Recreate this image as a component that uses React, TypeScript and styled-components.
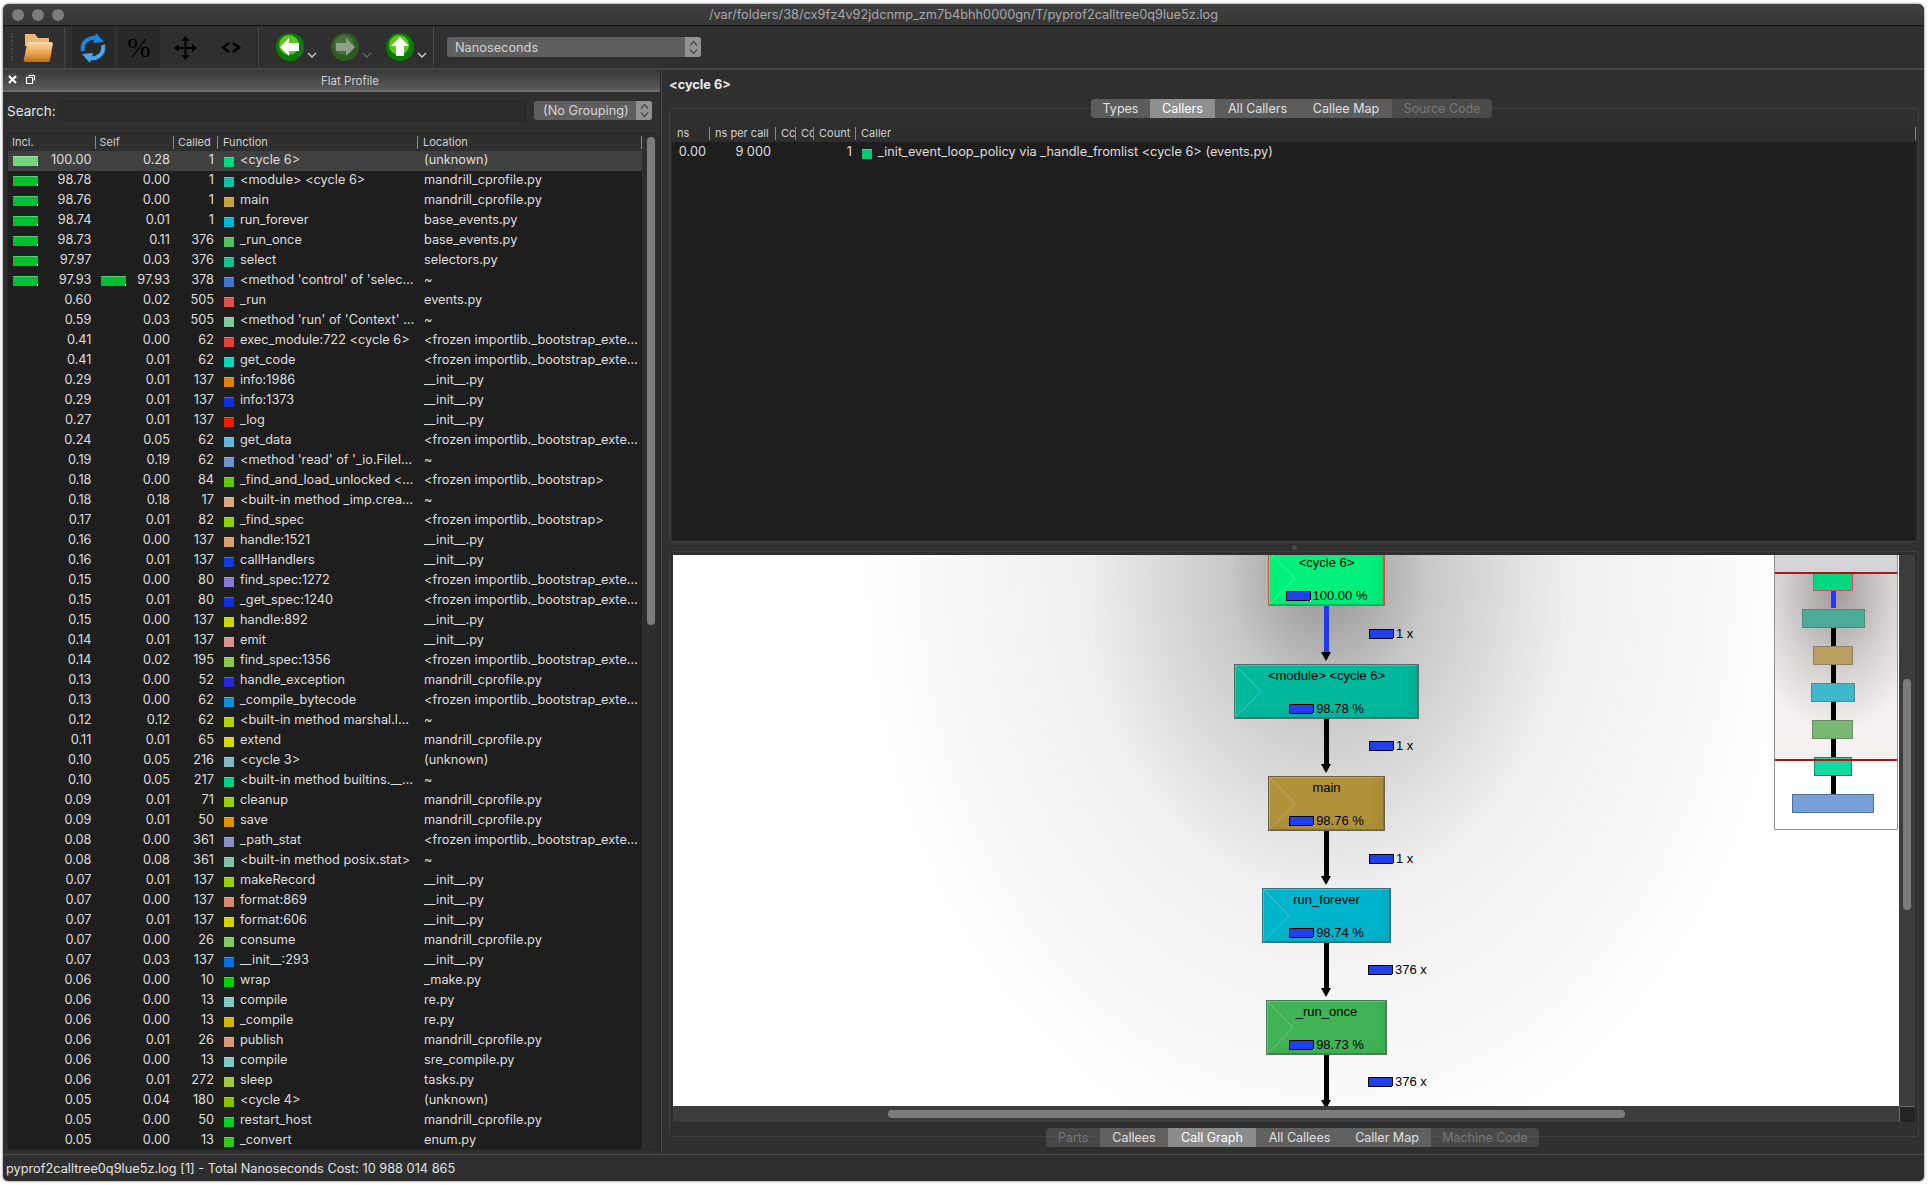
import React from 'react';
import styled, { createGlobalStyle } from 'styled-components';

const FROZEN_EXT = '<frozen importlib._bootstrap_exte…';
const FROZEN = '<frozen importlib._bootstrap>';
const MANDRILL = 'mandrill_cprofile.py';
const INIT = '__init__.py';

type Row = [string, string, string, string, string, string];

const ROWS: Row[] = [
  ['100.00', '0.28', '1', '#00d880', '<cycle 6>', '(unknown)'],
  ['98.78', '0.00', '1', '#10bfa5', '<module> <cycle 6>', MANDRILL],
  ['98.76', '0.00', '1', '#c8a040', 'main', MANDRILL],
  ['98.74', '0.01', '1', '#00b8d8', 'run_forever', 'base_events.py'],
  ['98.73', '0.11', '376', '#50c060', '_run_once', 'base_events.py'],
  ['97.97', '0.03', '376', '#10c090', 'select', 'selectors.py'],
  ['97.93', '97.93', '378', '#3f76d0', "<method 'control' of 'selec…", '~'],
  ['0.60', '0.02', '505', '#e05050', '_run', 'events.py'],
  ['0.59', '0.03', '505', '#80c8a0', "<method 'run' of 'Context' …", '~'],
  ['0.41', '0.00', '62', '#e04040', 'exec_module:722 <cycle 6>', FROZEN_EXT],
  ['0.41', '0.01', '62', '#00d8c0', 'get_code', FROZEN_EXT],
  ['0.29', '0.01', '137', '#e08000', 'info:1986', INIT],
  ['0.29', '0.01', '137', '#1030e0', 'info:1373', INIT],
  ['0.27', '0.01', '137', '#e82000', '_log', INIT],
  ['0.24', '0.05', '62', '#60b8d8', 'get_data', FROZEN_EXT],
  ['0.19', '0.19', '62', '#7090d0', "<method 'read' of '_io.FileI…", '~'],
  ['0.18', '0.00', '84', '#60c800', '_find_and_load_unlocked <…', FROZEN],
  ['0.18', '0.18', '17', '#d8a880', '<built-in method _imp.crea…', '~'],
  ['0.17', '0.01', '82', '#90d000', '_find_spec', FROZEN],
  ['0.16', '0.00', '137', '#d8a070', 'handle:1521', INIT],
  ['0.16', '0.01', '137', '#1038e0', 'callHandlers', INIT],
  ['0.15', '0.00', '80', '#8878d8', 'find_spec:1272', FROZEN_EXT],
  ['0.15', '0.01', '80', '#1030e0', '_get_spec:1240', FROZEN_EXT],
  ['0.15', '0.00', '137', '#c8d800', 'handle:892', INIT],
  ['0.14', '0.01', '137', '#d89090', 'emit', INIT],
  ['0.14', '0.02', '195', '#88c848', 'find_spec:1356', FROZEN_EXT],
  ['0.13', '0.00', '52', '#2828e0', 'handle_exception', MANDRILL],
  ['0.13', '0.00', '62', '#1090d8', '_compile_bytecode', FROZEN_EXT],
  ['0.12', '0.12', '62', '#b0d000', '<built-in method marshal.l…', '~'],
  ['0.11', '0.01', '65', '#d8d800', 'extend', MANDRILL],
  ['0.10', '0.05', '216', '#80b8c8', '<cycle 3>', '(unknown)'],
  ['0.10', '0.05', '217', '#00d088', '<built-in method builtins.__…', '~'],
  ['0.09', '0.01', '71', '#98d000', 'cleanup', MANDRILL],
  ['0.09', '0.01', '50', '#e09000', 'save', MANDRILL],
  ['0.08', '0.00', '361', '#8890c8', '_path_stat', FROZEN_EXT],
  ['0.08', '0.08', '361', '#80c0a8', '<built-in method posix.stat>', '~'],
  ['0.07', '0.01', '137', '#98d000', 'makeRecord', INIT],
  ['0.07', '0.00', '137', '#d88870', 'format:869', INIT],
  ['0.07', '0.01', '137', '#d8d000', 'format:606', INIT],
  ['0.07', '0.00', '26', '#80c860', 'consume', MANDRILL],
  ['0.07', '0.03', '137', '#0070e0', '__init__:293', INIT],
  ['0.06', '0.00', '10', '#00d000', 'wrap', '_make.py'],
  ['0.06', '0.00', '13', '#80c8c8', 'compile', 're.py'],
  ['0.06', '0.00', '13', '#d0b800', '_compile', 're.py'],
  ['0.06', '0.01', '26', '#d89878', 'publish', MANDRILL],
  ['0.06', '0.00', '13', '#80c8c8', 'compile', 'sre_compile.py'],
  ['0.06', '0.01', '272', '#a0c840', 'sleep', 'tasks.py'],
  ['0.05', '0.04', '180', '#88c000', '<cycle 4>', '(unknown)'],
  ['0.05', '0.00', '50', '#00d020', 'restart_host', MANDRILL],
  ['0.05', '0.00', '13', '#30c818', '_convert', 'enum.py'],
];

const NODES = [
  { label: '<cycle 6>', cost: '100.00 %', x: 595, y: -4, w: 117, color: '#00f07c', edge: '#d84c3c' },
  { label: '<module> <cycle 6>', cost: '98.78 %', x: 561, y: 109, w: 185, color: '#00b89c', edge: '#4e716c' },
  { label: 'main', cost: '98.76 %', x: 595, y: 221, w: 117, color: '#b0923a', edge: '#6a6040' },
  { label: 'run_forever', cost: '98.74 %', x: 589, y: 333, w: 129, color: '#00b4cc', edge: '#33707c' },
  { label: '_run_once', cost: '98.73 %', x: 593, y: 445, w: 121, color: '#40b455', edge: '#4c7c55' },
];

const EDGES = [
  { top: 51, height: 46, blue: true, count: '1 x', labelX: 696, labelY: 74 },
  { top: 164, height: 45, blue: false, count: '1 x', labelX: 696, labelY: 186 },
  { top: 276, height: 45, blue: false, count: '1 x', labelX: 696, labelY: 299 },
  { top: 388, height: 45, blue: false, count: '376 x', labelX: 695, labelY: 410 },
  { top: 500, height: 45, blue: false, count: '376 x', labelX: 695, labelY: 522 },
];

const TOP_TABS = [
  { label: 'Types', width: 59 },
  { label: 'Callers', width: 65, active: true },
  { label: 'All Callers', width: 85 },
  { label: 'Callee Map', width: 92 },
  { label: 'Source Code', width: 100, off: true },
];

const BOTTOM_TABS = [
  { label: 'Parts', width: 54, off: true },
  { label: 'Callees', width: 68 },
  { label: 'Call Graph', width: 88, active: true },
  { label: 'All Callees', width: 87 },
  { label: 'Caller Map', width: 88 },
  { label: 'Machine Code', width: 108, off: true },
];

const GlobalStyle = createGlobalStyle`
  html, body {
    margin: 0;
    background: #ffffff;
  }

  body {
    font-family: Inter, "Liberation Sans", sans-serif;
    font-size: 12.75px;
    color: #dedede;
  }
`;

const FolderIcon = () => (
  <svg width="30" height="31" viewBox="0 0 30 31">
    <defs>
      <linearGradient id="folderFront" x1="0" y1="0" x2="0" y2="1">
        <stop offset="0" stopColor="#f8d9a8" />
        <stop offset="0.55" stopColor="#e9a552" />
        <stop offset="1" stopColor="#b86f10" />
      </linearGradient>
    </defs>
    <path d="M2 2h10l3 4h11v8H2z" fill="#e8b878" />
    <path d="M3 30c-2 0-3-1-2-3l3-15c.3-1.500 1-2 2.500-2H28c1.500 0 2 1 1.800 2.500L27 28c-.3 1.500-1 2-2.500 2z" fill="url(#folderFront)" />
  </svg>
);

const ReloadIcon = () => (
  <svg width="28" height="32" viewBox="0 0 28 32" fill="none">
    <path d="M4 19C2 10 11 3 20 7" stroke="#1c86dc" strokeWidth="4" />
    <path d="M17 1l8 9-11 1z" fill="#1c86dc" />
    <path d="M24 13c2 9-7 16-16 12" stroke="#4aa8ec" strokeWidth="4" />
    <path d="M11 31l-8-9 11-1z" fill="#4aa8ec" />
  </svg>
);

const MoveIcon = () => (
  <svg width="23" height="24" viewBox="0 0 23 24">
    <path d="M11.500 4V20M4 12H19" stroke="#000000" strokeWidth="2" />
    <path d="M11.500 0L15.500 5H7.500zM11.500 24L7.500 19H15.500zM0 12L5 8V16zM23 12L18 16V8z" fill="#000000" />
  </svg>
);

const AnglesIcon = () => (
  <svg width="20" height="11" viewBox="0 0 20 11" fill="none" stroke="#000000" strokeWidth="2.400">
    <path d="M8 1L2 5.500L8 10" />
    <path d="M12 1L18 5.500L12 10" />
  </svg>
);

const NavIcon: React.FC<{ angle: number; dim?: boolean }> = ({ angle, dim }) => (
  <svg width="28" height="28" viewBox="0 0 28 28">
    <circle cx="14" cy="14" r="14" fill={dim ? '#2f5a22' : '#0c7a08'} />
    <circle cx="13" cy="12" r="10" fill={dim ? '#47733a' : '#5cc81c'} />
    <polygon
      points="4,14 13,5 13,10 23,10 23,18 13,18 13,23"
      fill={dim ? '#8f9f8b' : '#ffffff'}
      transform={`rotate(${angle} 14 14)`}
    />
  </svg>
);

const SmallChevron: React.FC<{ dim?: boolean }> = ({ dim }) => (
  <svg width="10" height="7" viewBox="0 0 10 7" fill="none">
    <path d="M1 1l4 4 4-4" stroke={dim ? '#666666' : '#d0d0d0'} strokeWidth="1.300" />
  </svg>
);

const UpDownArrows = () => (
  <svg width="9" height="15" viewBox="0 0 9 15" fill="none" stroke="#2e2e2e" strokeWidth="1.100">
    <path d="M1 5.500l3.500-4 3.500 4" />
    <path d="M1 9.500l3.500 4 3.500-4" />
  </svg>
);

const CloseGlyph = () => (
  <svg width="9" height="9" viewBox="0 0 9 9" stroke="#ffffff" strokeWidth="2">
    <path d="M1 1l7 7M8 1l-7 7" />
  </svg>
);

const RestoreGlyph = () => (
  <svg width="9" height="9" viewBox="0 0 9 9" fill="none" stroke="#ffffff" strokeWidth="1">
    <path d="M3 2.500V.5h5.500v4.500H6.500" />
    <rect x="0.500" y="2.500" width="6" height="6" />
  </svg>
);

const NodeChevron: React.FC<{ width: number }> = ({ width }) => (
  <NodeMark width={width} height="55" viewBox={`0 0 ${width} 55`} fill="none">
    <path d="M2 2L27 27.500L2 53" stroke="#ffffff" strokeOpacity="0.4" strokeWidth="0.700" />
  </NodeMark>
);

const BirdsEye = () => (
  <svg width="124" height="275" viewBox="0 0 124 275">
    <defs>
      <radialGradient id="birdShade" cx="0.5" cy="0.1" r="0.75">
        <stop offset="0" stopColor="#a09a9a" />
        <stop offset="0.6" stopColor="#d8d4d4" />
        <stop offset="1" stopColor="#f6f0f0" />
      </radialGradient>
    </defs>
    <rect x="0" y="0" width="124" height="275" fill="#ffffff" />
    <rect x="0" y="0" width="124" height="18" fill="#d4d4d6" />
    <rect x="0" y="18" width="124" height="187" fill="url(#birdShade)" />
    <rect x="57" y="35" width="5" height="18" fill="#2238ff" />
    <rect x="57" y="73" width="5" height="18" fill="#000000" />
    <rect x="57" y="110" width="5" height="18" fill="#000000" />
    <rect x="57" y="147" width="5" height="18" fill="#000000" />
    <rect x="57" y="184" width="5" height="18" fill="#000000" />
    <rect x="57" y="221" width="5" height="18" fill="#000000" />
    <rect x="39.500" y="17.500" width="39" height="18" fill="#00d880" stroke="#e84868" />
    <rect x="28.500" y="54.500" width="62" height="18" fill="#4cab98" stroke="#4a8a80" />
    <rect x="39.500" y="91.500" width="39" height="18" fill="#baa060" stroke="#8a8268" />
    <rect x="37.500" y="128.500" width="43" height="18" fill="#40b8cc" stroke="#4a8a98" />
    <rect x="38.500" y="165.500" width="40" height="18" fill="#78b870" stroke="#6a8a68" />
    <rect x="40.500" y="202.500" width="37" height="18" fill="#14d8a0" stroke="#108a68" />
    <rect x="18.500" y="239.500" width="81" height="18" fill="#78a0d8" stroke="#50709c" />
    <rect x="0" y="17" width="124" height="2" fill="#a01818" />
    <rect x="0" y="204" width="124" height="2" fill="#a01818" />
    <path d="M0.500 0V274.500H123.500V0" fill="none" stroke="#909090" />
  </svg>
);

const App: React.FC = () => (
  <>
    <GlobalStyle />
    <SPage>
      <SWindow>
        <STitleBar>
          <STrafficLights>
            <STrafficLight />
            <STrafficLight />
            <STrafficLight />
          </STrafficLights>
          /var/folders/38/cx9fz4v92jdcnmp_zm7b4bhh0000gn/T/pyprof2calltree0q9lue5z.log
        </STitleBar>

        <SToolbar>
          <SHandle />
          <SFolderSlot>
            <FolderIcon />
          </SFolderSlot>
          <SToolSeparator $left={11} />
          <SToolGroup>
            <SToolButton $pressed>
              <ReloadIcon />
            </SToolButton>
            <SToolButton $pressed>
              <SPercent>%</SPercent>
            </SToolButton>
            <SToolButton>
              <MoveIcon />
            </SToolButton>
            <SToolButton>
              <AnglesIcon />
            </SToolButton>
          </SToolGroup>
          <SToolSeparator $left={6} />
          <SNavGroup>
            <SNavButton>
              <NavIcon angle={0} />
              <SmallChevron />
            </SNavButton>
            <SNavButton>
              <NavIcon angle={180} dim />
              <SmallChevron dim />
            </SNavButton>
            <SNavButton>
              <NavIcon angle={90} />
              <SmallChevron />
            </SNavButton>
          </SNavGroup>
          <SToolSeparator $left={6} />
          <SEventCombo>
            Nanoseconds
            <SComboArrows>
              <UpDownArrows />
            </SComboArrows>
          </SEventCombo>
        </SToolbar>

        <SMain>
          <SLeftDock>
            <SDockTitle>
              <SDockButtons>
                <SDockButton>
                  <CloseGlyph />
                </SDockButton>
                <SDockButton>
                  <RestoreGlyph />
                </SDockButton>
              </SDockButtons>
              Flat Profile
            </SDockTitle>
            <SSearchRow>
              <SSearchLabel>Search:</SSearchLabel>
              <SSearchInput />
              <SGroupingCombo>
                (No Grouping)
                <SComboArrows>
                  <UpDownArrows />
                </SComboArrows>
              </SGroupingCombo>
            </SSearchRow>
            <STableFrame>
              <STable>
                <SHeaderRow>
                  <SHeaderCell>Incl.</SHeaderCell>
                  <SHeaderCell>Self</SHeaderCell>
                  <SHeaderCell>Called</SHeaderCell>
                  <SHeaderCell>Function</SHeaderCell>
                  <SHeaderCell>Location</SHeaderCell>
                </SHeaderRow>
                {ROWS.map((row, index) => (
                  <SRow key={`${row[4]}-${index}`} $selected={index === 0}>
                    <SNumberCell>
                      {index < 7 && <SCostBar $selected={index === 0} />}
                      {row[0]}
                    </SNumberCell>
                    <SNumberCell>
                      {index === 6 && <SCostBar />}
                      {row[1]}
                    </SNumberCell>
                    <SNumberCell>{row[2]}</SNumberCell>
                    <SFunctionCell>
                      <SColorSquare $color={row[3]} />
                      {row[4]}
                    </SFunctionCell>
                    <SLocationCell>{row[5]}</SLocationCell>
                  </SRow>
                ))}
              </STable>
              <STableScroll>
                <STableThumb />
              </STableScroll>
            </STableFrame>
          </SLeftDock>

          <SRightPane>
            <SHeading>{'<cycle 6>'}</SHeading>

            <STabBar $below={false}>
              {TOP_TABS.map((tab) => (
                <STab key={tab.label} $width={tab.width} $active={tab.active} $off={tab.off}>
                  {tab.label}
                </STab>
              ))}
            </STabBar>
            <STopFrame>
              <SCallerTree>
                <SCallerHeader>
                  <SCallerHead $width={38}>ns</SCallerHead>
                  <SCallerHead $width={66}>ns per call</SCallerHead>
                  <SCallerHead $width={20}>Cc</SCallerHead>
                  <SCallerHead $width={18}>Cc</SCallerHead>
                  <SCallerHead $width={42}>Count</SCallerHead>
                  <SCallerHead $width={1060}>Caller</SCallerHead>
                </SCallerHeader>
                <SCallerRow>
                  <SCallerValue $width={34}>0.00</SCallerValue>
                  <SCallerValue $width={65}>9 000</SCallerValue>
                  <SCallerValue $width={81}>1</SCallerValue>
                  <SCallerSquare $color="#00c878" />
                  <SCallerName>
                    _init_event_loop_policy via _handle_fromlist {'<cycle 6>'} (events.py)
                  </SCallerName>
                </SCallerRow>
              </SCallerTree>
            </STopFrame>

            <SPaneSplitter>
              <SSplitterDot />
            </SPaneSplitter>

            <SGraphFrame>
              <SGraphGrid>
                <SCanvas>
                  <SCanvasShade />
                  {EDGES.map((edge) => (
                    <React.Fragment key={edge.top}>
                      <SEdge $top={edge.top} $height={edge.height} $blue={edge.blue} />
                      <SEdgeLabel $x={edge.labelX} $y={edge.labelY}>
                        <SGauge />
                        {edge.count}
                      </SEdgeLabel>
                    </React.Fragment>
                  ))}
                  {NODES.map((node) => (
                    <SNode
                      key={node.label}
                      $x={node.x}
                      $y={node.y}
                      $width={node.w}
                      $color={node.color}
                      $edge={node.edge}
                    >
                      <NodeChevron width={node.w} />
                      <SNodeLabel>{node.label}</SNodeLabel>
                      <SNodeCost>
                        <SGauge />
                        {node.cost}
                      </SNodeCost>
                    </SNode>
                  ))}
                  <SBirdsEye>
                    <BirdsEye />
                  </SBirdsEye>
                </SCanvas>
                <SVerticalScroll>
                  <SVerticalThumb />
                </SVerticalScroll>
                <SHorizontalScroll>
                  <SHorizontalThumb />
                </SHorizontalScroll>
                <SScrollCorner />
              </SGraphGrid>
            </SGraphFrame>

            <STabBar $below>
              {BOTTOM_TABS.map((tab) => (
                <STab key={tab.label} $width={tab.width} $active={tab.active} $off={tab.off} $glass>
                  {tab.label}
                </STab>
              ))}
            </STabBar>
          </SRightPane>
        </SMain>

        <SStatusBar>pyprof2calltree0q9lue5z.log [1] - Total Nanoseconds Cost: 10 988 014 865</SStatusBar>
      </SWindow>
    </SPage>
  </>
);

const SPage = styled.div`
  box-sizing: border-box;
  width: 1928px;
  height: 1185px;
  padding: 4px 4px 4px 3px;
  overflow: hidden;
  background: #ffffff;
`;

const SWindow = styled.div`
  display: flex;
  flex-direction: column;

  height: 100%;
  border-radius: 6px 6px 5px 5px;
  overflow: hidden;
  background: #2f2f2f;
  box-shadow: 0 0 3px rgba(0, 0, 0, 0.6);
`;

const STitleBar = styled.div`
  position: relative;
  display: flex;
  align-items: center;
  justify-content: center;
  flex: none;

  height: 21px;
  border-bottom: 1px solid #151515;
  background: linear-gradient(#404040, #363636);
  color: #a8a8a8;
  font-size: 12.75px;
`;

const STrafficLights = styled.div`
  position: absolute;
  top: 5px;
  left: 9px;
  display: flex;
  gap: 8px;
`;

const STrafficLight = styled.span`
  width: 12px;
  height: 12px;
  border-radius: 50%;
  background: #7c7c7c;
`;

const SToolbar = styled.div`
  display: flex;
  align-items: center;
  flex: none;

  box-sizing: border-box;
  height: 44px;
  padding-left: 8px;
  border-bottom: 2px solid #454545;
  background: #2f2f2f;
`;

const SHandle = styled.div`
  width: 2px;
  height: 28px;
  border-left: 2px dotted #484848;
`;

const SFolderSlot = styled.div`
  display: flex;
  margin-left: 8px;
`;

const SToolSeparator = styled.div<{ $left: number }>`
  align-self: stretch;
  width: 0;
  margin-left: ${(p) => p.$left}px;
  margin-top: 2px;
  border-left: 1px dotted #5c5c5c;
`;

const SToolGroup = styled.div`
  display: flex;
  gap: 4px;
  align-self: stretch;
  margin-left: 7px;
`;

const SToolButton = styled.div<{ $pressed?: boolean }>`
  display: flex;
  align-items: center;
  justify-content: center;

  width: 42px;
  padding-top: 1px;
  background: ${(p) => (p.$pressed ? '#292929' : 'transparent')};
`;

const SPercent = styled.span`
  color: #000000;
  font-family: 'Liberation Serif', serif;
  font-size: 28px;
`;

const SNavGroup = styled.div`
  display: flex;
  gap: 14px;
  margin-left: 17px;
`;

const SNavButton = styled.div`
  display: flex;
  align-items: flex-end;
  gap: 3px;

  width: 41px;
  padding-bottom: 1px;

  svg:last-child {
    margin-bottom: 2px;
  }
`;

const SEventCombo = styled.div`
  display: flex;
  align-items: center;
  justify-content: space-between;

  box-sizing: border-box;
  width: 254px;
  height: 20px;
  margin-left: 13px;
  padding-left: 8px;
  border-radius: 3px;
  background: #5f5f5f;
  color: #d4d4d4;
`;

const SComboArrows = styled.div`
  display: flex;
  align-items: center;
  justify-content: center;

  width: 16px;
  height: 100%;
  border-radius: 0 3px 3px 0;
  background: #929292;
`;

const SMain = styled.div`
  display: flex;
  flex: 1;
  min-height: 0;
`;

const SLeftDock = styled.div`
  display: flex;
  flex-direction: column;
  flex: none;

  width: 657px;
  border-right: 1px solid #232323;
`;

const SDockTitle = styled.div`
  position: relative;
  display: flex;
  align-items: center;
  justify-content: center;
  flex: none;

  box-sizing: border-box;
  height: 22px;
  padding: 1px 0 0 37px;
  border-bottom: 2px solid #6e6e6e;
  background: linear-gradient(#383838, #5a5a5a);
  color: #d0d0d0;
  font-size: 11.5px;
`;

const SDockButtons = styled.div`
  position: absolute;
  top: 3px;
  left: 3px;
  display: flex;
  gap: 5px;
`;

const SDockButton = styled.span`
  display: flex;
  align-items: center;
  justify-content: center;

  width: 13px;
  height: 13px;
  border-radius: 50%;
  background: #4e4e4e;
`;

const SSearchRow = styled.div`
  display: flex;
  align-items: center;
  flex: none;

  box-sizing: border-box;
  height: 41px;
  padding: 0 4px 4px 4px;
`;

const SSearchLabel = styled.span`
  width: 52px;
  color: #e4e4e4;
  font-size: 13.5px;
`;

const SSearchInput = styled.div`
  width: 465px;
  height: 19px;
  border: 1px solid #272727;
  background: #2b2b2b;
`;

const SGroupingCombo = styled.div`
  display: flex;
  align-items: center;
  justify-content: space-between;

  box-sizing: border-box;
  width: 118px;
  height: 19px;
  margin-left: 8px;
  padding-left: 9px;
  border-radius: 3px;
  background: #5f5f5f;
  color: #d4d4d4;
`;

const STableFrame = styled.div`
  display: flex;
  flex: 1;
  min-height: 0;

  margin: 0 2px 4px 4px;
  border: 1px solid #262626;
  background: #1e1e1e;
`;

const STable = styled.div`
  flex: none;
  width: 634px;
  overflow: hidden;
`;

const TABLE_COLUMNS = '87.5px 78.5px 44px 200px 224px';

const SHeaderRow = styled.div`
  display: grid;
  grid-template-columns: ${TABLE_COLUMNS};

  height: 17px;
  background: #2e2e2e;
`;

const SHeaderCell = styled.div`
  padding-left: 4px;
  border-right: 1px solid #8a8a8a;
  margin: 2px 0;
  color: #d0d0d0;
  font-size: 11px;
  line-height: 13px;

  &:nth-child(n + 4) {
    padding-left: 5px;
  }
`;

const SRow = styled.div<{ $selected: boolean }>`
  display: grid;
  grid-template-columns: ${TABLE_COLUMNS};
  align-items: center;

  box-sizing: border-box;
  height: 20px;
  padding-bottom: 3px;
  background: ${(p) => (p.$selected ? '#404040' : 'transparent')};
`;

const SNumberCell = styled.div`
  display: flex;
  align-items: center;
  justify-content: flex-end;

  padding-right: 4px;
`;

const SCostBar = styled.span<{ $selected?: boolean }>`
  position: relative;
  flex: none;

  width: 25px;
  height: 10px;
  margin-right: auto;
  margin-left: 5px;
  margin-top: 3px;
  background: ${(p) => (p.$selected ? '#74d67c' : '#00c030')};
  box-shadow: inset 0 1px 0 rgba(255, 255, 255, 0.3);

  &::after {
    content: '';
    position: absolute;
    right: 0;
    bottom: 0;
    width: 1px;
    height: 2px;
    background: #ffffff;
  }
`;

const SFunctionCell = styled.div`
  display: flex;
  align-items: center;

  padding-left: 6px;
  white-space: nowrap;
`;

const SColorSquare = styled.span<{ $color: string }>`
  flex: none;

  box-sizing: border-box;
  width: 10px;
  height: 10px;
  margin-right: 6px;
  margin-top: 4px;
  border-top: 1px solid rgba(255, 255, 255, 0.25);
  background: ${(p) => p.$color};
`;

const SCallerSquare = styled(SColorSquare)`
  margin-left: 10px;
  margin-right: 6px;
`;

const SLocationCell = styled.div`
  padding-left: 6px;
  white-space: nowrap;
`;

const STableScroll = styled.div`
  flex: 1;
  padding: 3px 2px 0 5px;
  background: #2e2e2e;
`;

const STableThumb = styled.div`
  height: 488px;
  border-radius: 4px;
  background: #7c7c7c;
`;

const SRightPane = styled.div`
  display: flex;
  flex-direction: column;
  flex: 1;
  min-width: 0;

  box-sizing: border-box;
  padding: 0 5px 0 7px;
  border-left: 1px solid #4a4a4a;
`;

const SHeading = styled.div`
  flex: none;

  height: 29px;
  color: #e8e8e8;
  font-weight: 700;
  line-height: 29px;
`;

const STabBar = styled.div<{ $below: boolean }>`
  position: relative;
  z-index: 1;
  display: flex;
  align-self: center;
  flex: none;

  height: 19px;
  margin-top: ${(p) => (p.$below ? '-9px' : '0')};
  margin-bottom: ${(p) => (p.$below ? '0' : '-10px')};
  margin-left: ${(p) => (p.$below ? '-3px' : '-5px')};
  border-radius: 4px;
  overflow: hidden;
`;

const STab = styled.div<{ $width: number; $active?: boolean; $off?: boolean; $glass?: boolean }>`
  display: flex;
  align-items: center;
  justify-content: center;

  width: ${(p) => p.$width}px;
  font-size: 12.5px;
  color: ${(p) => (p.$off ? '#777777' : p.$active ? '#ffffff' : '#e0e0e0')};
  background: ${(p) => {
    if (p.$active) return p.$glass ? 'rgba(150, 150, 150, 0.9)' : '#8f8f8f';
    if (p.$off) return p.$glass ? 'rgba(90, 90, 90, 0.6)' : '#4b4b4b';
    return p.$glass ? 'rgba(105, 105, 105, 0.85)' : '#5c5c5c';
  }};
`;

const STopFrame = styled.div`
  flex: none;

  box-sizing: border-box;
  height: 435px;
  padding: 16px 2px 2px 2px;
  border: 1px solid #3f3f3f;
  border-radius: 3px;
`;

const SCallerTree = styled.div`
  height: 100%;
  background: #1e1e1e;
`;

const SCallerHeader = styled.div`
  display: flex;
  height: 17px;
  background: #2e2e2e;
`;

const SCallerHead = styled.div<{ $width: number }>`
  width: ${(p) => p.$width}px;
  flex: none;

  box-sizing: border-box;
  padding-left: 5px;
  margin: 2px 0;
  border-right: 1px solid #8a8a8a;
  overflow: hidden;
  color: #d0d0d0;
  font-size: 11px;
  line-height: 13px;
  white-space: nowrap;
`;

const SCallerRow = styled.div`
  display: flex;
  align-items: center;

  box-sizing: border-box;
  height: 20px;
  padding-bottom: 1px;
`;

const SCallerValue = styled.div<{ $width: number }>`
  flex: none;
  width: ${(p) => p.$width}px;
  text-align: right;
`;

const SCallerName = styled.span`
  white-space: nowrap;
`;

const SPaneSplitter = styled.div`
  display: flex;
  align-items: center;
  justify-content: center;
  flex: none;

  height: 8px;
`;

const SSplitterDot = styled.span`
  width: 5px;
  height: 5px;
  border-radius: 50%;
  background: #4c4c4c;
`;

const SGraphFrame = styled.div`
  flex: none;

  box-sizing: border-box;
  height: 586px;
  padding: 3px 2px 14px 3px;
  border: 1px solid #3f3f3f;
  border-radius: 3px;
`;

const SGraphGrid = styled.div`
  display: grid;
  grid-template-columns: 1226px 16px;
  grid-template-rows: 551px 16px;
`;

const SCanvas = styled.div`
  position: relative;
  overflow: hidden;
  background: #ffffff;
`;

const SCanvasShade = styled.div`
  position: absolute;
  inset: 0;
  background:
    radial-gradient(ellipse 100px 120px at 654px 20px, rgba(0, 0, 0, 0.15), rgba(0, 0, 0, 0) 100%),
    radial-gradient(ellipse 240px 320px at 654px 20px, rgba(0, 0, 0, 0.22), rgba(0, 0, 0, 0) 100%),
    radial-gradient(
      ellipse 470px 620px at 654px 0,
      rgba(0, 0, 0, 0.13) 0,
      rgba(0, 0, 0, 0.08) 40%,
      rgba(0, 0, 0, 0.035) 75%,
      rgba(0, 0, 0, 0) 100%
    );
`;

const SNode = styled.div<{ $x: number; $y: number; $width: number; $color: string; $edge: string }>`
  position: absolute;
  left: ${(p) => p.$x}px;
  top: ${(p) => p.$y}px;
  display: flex;
  flex-direction: column;
  align-items: center;
  justify-content: space-between;

  box-sizing: border-box;
  width: ${(p) => p.$width}px;
  height: 55px;
  padding: 3px 0 2px;
  border: 1px solid ${(p) => p.$edge};
  background: ${(p) => p.$color};
  box-shadow:
    inset 1px 1px 0 rgba(255, 255, 255, 0.22),
    inset -1px -1px 0 rgba(0, 0, 0, 0.18),
    inset -8px -4px 8px rgba(0, 0, 0, 0.05);
  color: #000000;
  font-family: 'Liberation Sans', sans-serif;
  font-size: 13px;
`;

const NodeMark = styled.svg`
  position: absolute;
  top: -1px;
  left: -1px;
`;

const SNodeLabel = styled.span`
  position: relative;
  white-space: nowrap;
  line-height: 15px;
`;

const SNodeCost = styled.span`
  position: relative;
  display: flex;
  align-items: center;
  gap: 2px;
  line-height: 15px;
`;

const SGauge = styled.span`
  position: relative;
  flex: none;

  box-sizing: border-box;
  width: 25px;
  height: 10px;
  border: 1px solid #000000;
  background: #2040f0;

  &::after {
    content: '';
    position: absolute;
    right: -1px;
    bottom: -1px;
    width: 1px;
    height: 1px;
    background: #ffffff;
  }
`;

const SEdge = styled.div<{ $top: number; $height: number; $blue: boolean }>`
  position: absolute;
  left: 651px;
  top: ${(p) => p.$top}px;

  width: 5px;
  height: ${(p) => p.$height}px;
  background: ${(p) => (p.$blue ? '#2238f0' : '#000000')};

  &::after {
    content: '';
    position: absolute;
    left: -3px;
    bottom: -9px;
    width: 0;
    height: 0;
    border-top: 9px solid #000000;
    border-left: 5.5px solid transparent;
    border-right: 5.5px solid transparent;
  }
`;

const SEdgeLabel = styled.div<{ $x: number; $y: number }>`
  position: absolute;
  left: ${(p) => p.$x}px;
  top: ${(p) => p.$y}px;
  display: flex;
  align-items: center;
  gap: 2px;

  color: #000000;
  font-family: 'Liberation Sans', sans-serif;
  font-size: 13px;
  line-height: 10px;
`;

const SBirdsEye = styled.div`
  position: absolute;
  top: 0;
  right: 1px;
  display: flex;
`;

const SVerticalScroll = styled.div`
  padding: 124px 4px 0;
  background: #3c3c3c;
`;

const SVerticalThumb = styled.div`
  height: 231px;
  border-radius: 4px;
  background: #7c7c7c;
`;

const SHorizontalScroll = styled.div`
  padding: 4px 0 0 215px;
  background: #3c3c3c;
`;

const SHorizontalThumb = styled.div`
  width: 737px;
  height: 8px;
  border-radius: 4px;
  background: #7c7c7c;
`;

const SScrollCorner = styled.div`
  border-top: 1px solid #6a6a6a;
  border-left: 1px solid #6a6a6a;
  background: #242424;
`;

const SStatusBar = styled.div`
  display: flex;
  align-items: center;
  flex: none;

  height: 26px;
  padding-left: 3px;
  border-top: 1px solid #474747;
  color: #e2e2e2;
`;

export default App;
